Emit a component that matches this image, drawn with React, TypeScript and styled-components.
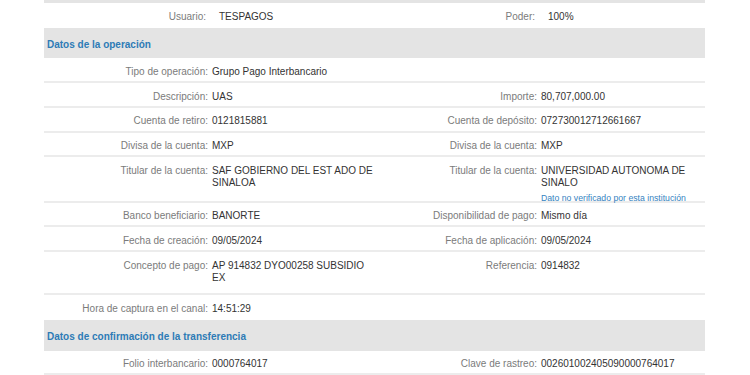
import React from "react";
import styled, { createGlobalStyle } from "styled-components";

const GlobalStyle = createGlobalStyle`
  body {
    margin: 0;
    background: #ffffff;
    font-family: "Liberation Sans", Arial, sans-serif;
  }
`;

export const Panel = styled.div`
  width: 661px;
  margin-left: 44px;
  font-size: 10px;
`;

export const TopStrip = styled.div`
  height: 3px;
  background-color: #e4e4e4;
`;

export const SectionHeader = styled.div`
  height: 30.5px;
  box-sizing: border-box;
  padding: 3px 0 0 3px;
  display: flex;
  align-items: center;
  background-color: #e4e4e4;
  color: #2d7bb6;
  font-weight: bold;
`;

export const Row = styled.div<{ $extra?: number; $last?: boolean }>`
  display: grid;
  grid-template-columns: 168px 162.5px 166.5px 1fr;
  padding-top: 7.5px;
  padding-bottom: ${(p) => 3.25 + (p.$extra || 0)}px;
  line-height: 12px;
  border-bottom: 2px solid ${(p) => (p.$last ? "transparent" : "#ececec")};
`;

export const Label = styled.div<{ $top?: boolean }>`
  text-align: right;
  padding-right: ${(p) => (p.$top ? 6 : 4)}px;
  color: #7b7b7b;
`;

export const Value = styled.div<{ $top?: boolean }>`
  padding-left: ${(p) => (p.$top ? 7 : 0)}px;
  color: #333333;
`;

export const Note = styled.div`
  margin-top: 4px;
  margin-bottom: -5.5px;
  font-size: 8.7px;
  line-height: 10px;
  color: #3583bf;
`;

type Field = { label: string; value: string; note?: string };

const rows: { left: Field; right?: Field; extra?: number }[] = [
  {
    left: { label: "Tipo de operación:", value: "Grupo Pago Interbancario" },
  },
  {
    left: { label: "Descripción:", value: "UAS" },
    right: { label: "Importe:", value: "80,707,000.00" },
  },
  {
    left: { label: "Cuenta de retiro:", value: "0121815881" },
    right: { label: "Cuenta de depósito:", value: "072730012712661667" },
  },
  {
    left: { label: "Divisa de la cuenta:", value: "MXP" },
    right: { label: "Divisa de la cuenta:", value: "MXP" },
  },
  {
    left: {
      label: "Titular de la cuenta:",
      value: "SAF GOBIERNO DEL EST ADO DE SINALOA",
    },
    right: {
      label: "Titular de la cuenta:",
      value: "UNIVERSIDAD AUTONOMA DE SINALO",
      note: "Dato no verificado por esta institución",
    },
  },
  {
    left: { label: "Banco beneficiario:", value: "BANORTE" },
    right: { label: "Disponibilidad de pago:", value: "Mismo día" },
  },
  {
    left: { label: "Fecha de creación:", value: "09/05/2024" },
    right: { label: "Fecha de aplicación:", value: "09/05/2024" },
  },
  {
    left: {
      label: "Concepto de pago:",
      value: "AP 914832 DYO00258 SUBSIDIO EX",
    },
    right: { label: "Referencia:", value: "0914832" },
    extra: 6.5,
  },
  {
    left: { label: "Hora de captura en el canal:", value: "14:51:29" },
  },
];

function Cells({ field, top }: { field?: Field; top?: boolean }) {
  if (!field) {
    return (
      <>
        <Label />
        <Value />
      </>
    );
  }
  return (
    <>
      <Label $top={top}>{field.label}</Label>
      <Value $top={top}>
        {field.value}
        {field.note ? <Note>{field.note}</Note> : null}
      </Value>
    </>
  );
}

export default function App() {
  return (
    <>
      <GlobalStyle />
      <Panel>
        <TopStrip />
        <Row $last>
          <Cells field={{ label: "Usuario:", value: "TESPAGOS" }} top />
          <Cells field={{ label: "Poder:", value: "100%" }} top />
        </Row>

        <SectionHeader>Datos de la operación</SectionHeader>
        {rows.map((r, i) => (
          <Row key={i} $extra={r.extra} $last={i === rows.length - 1}>
            <Cells field={r.left} />
            <Cells field={r.right} />
          </Row>
        ))}

        <SectionHeader>Datos de confirmación de la transferencia</SectionHeader>
        <Row>
          <Cells field={{ label: "Folio interbancario:", value: "0000764017" }} />
          <Cells
            field={{
              label: "Clave de rastreo:",
              value: "002601002405090000764017",
            }}
          />
        </Row>
      </Panel>
    </>
  );
}
